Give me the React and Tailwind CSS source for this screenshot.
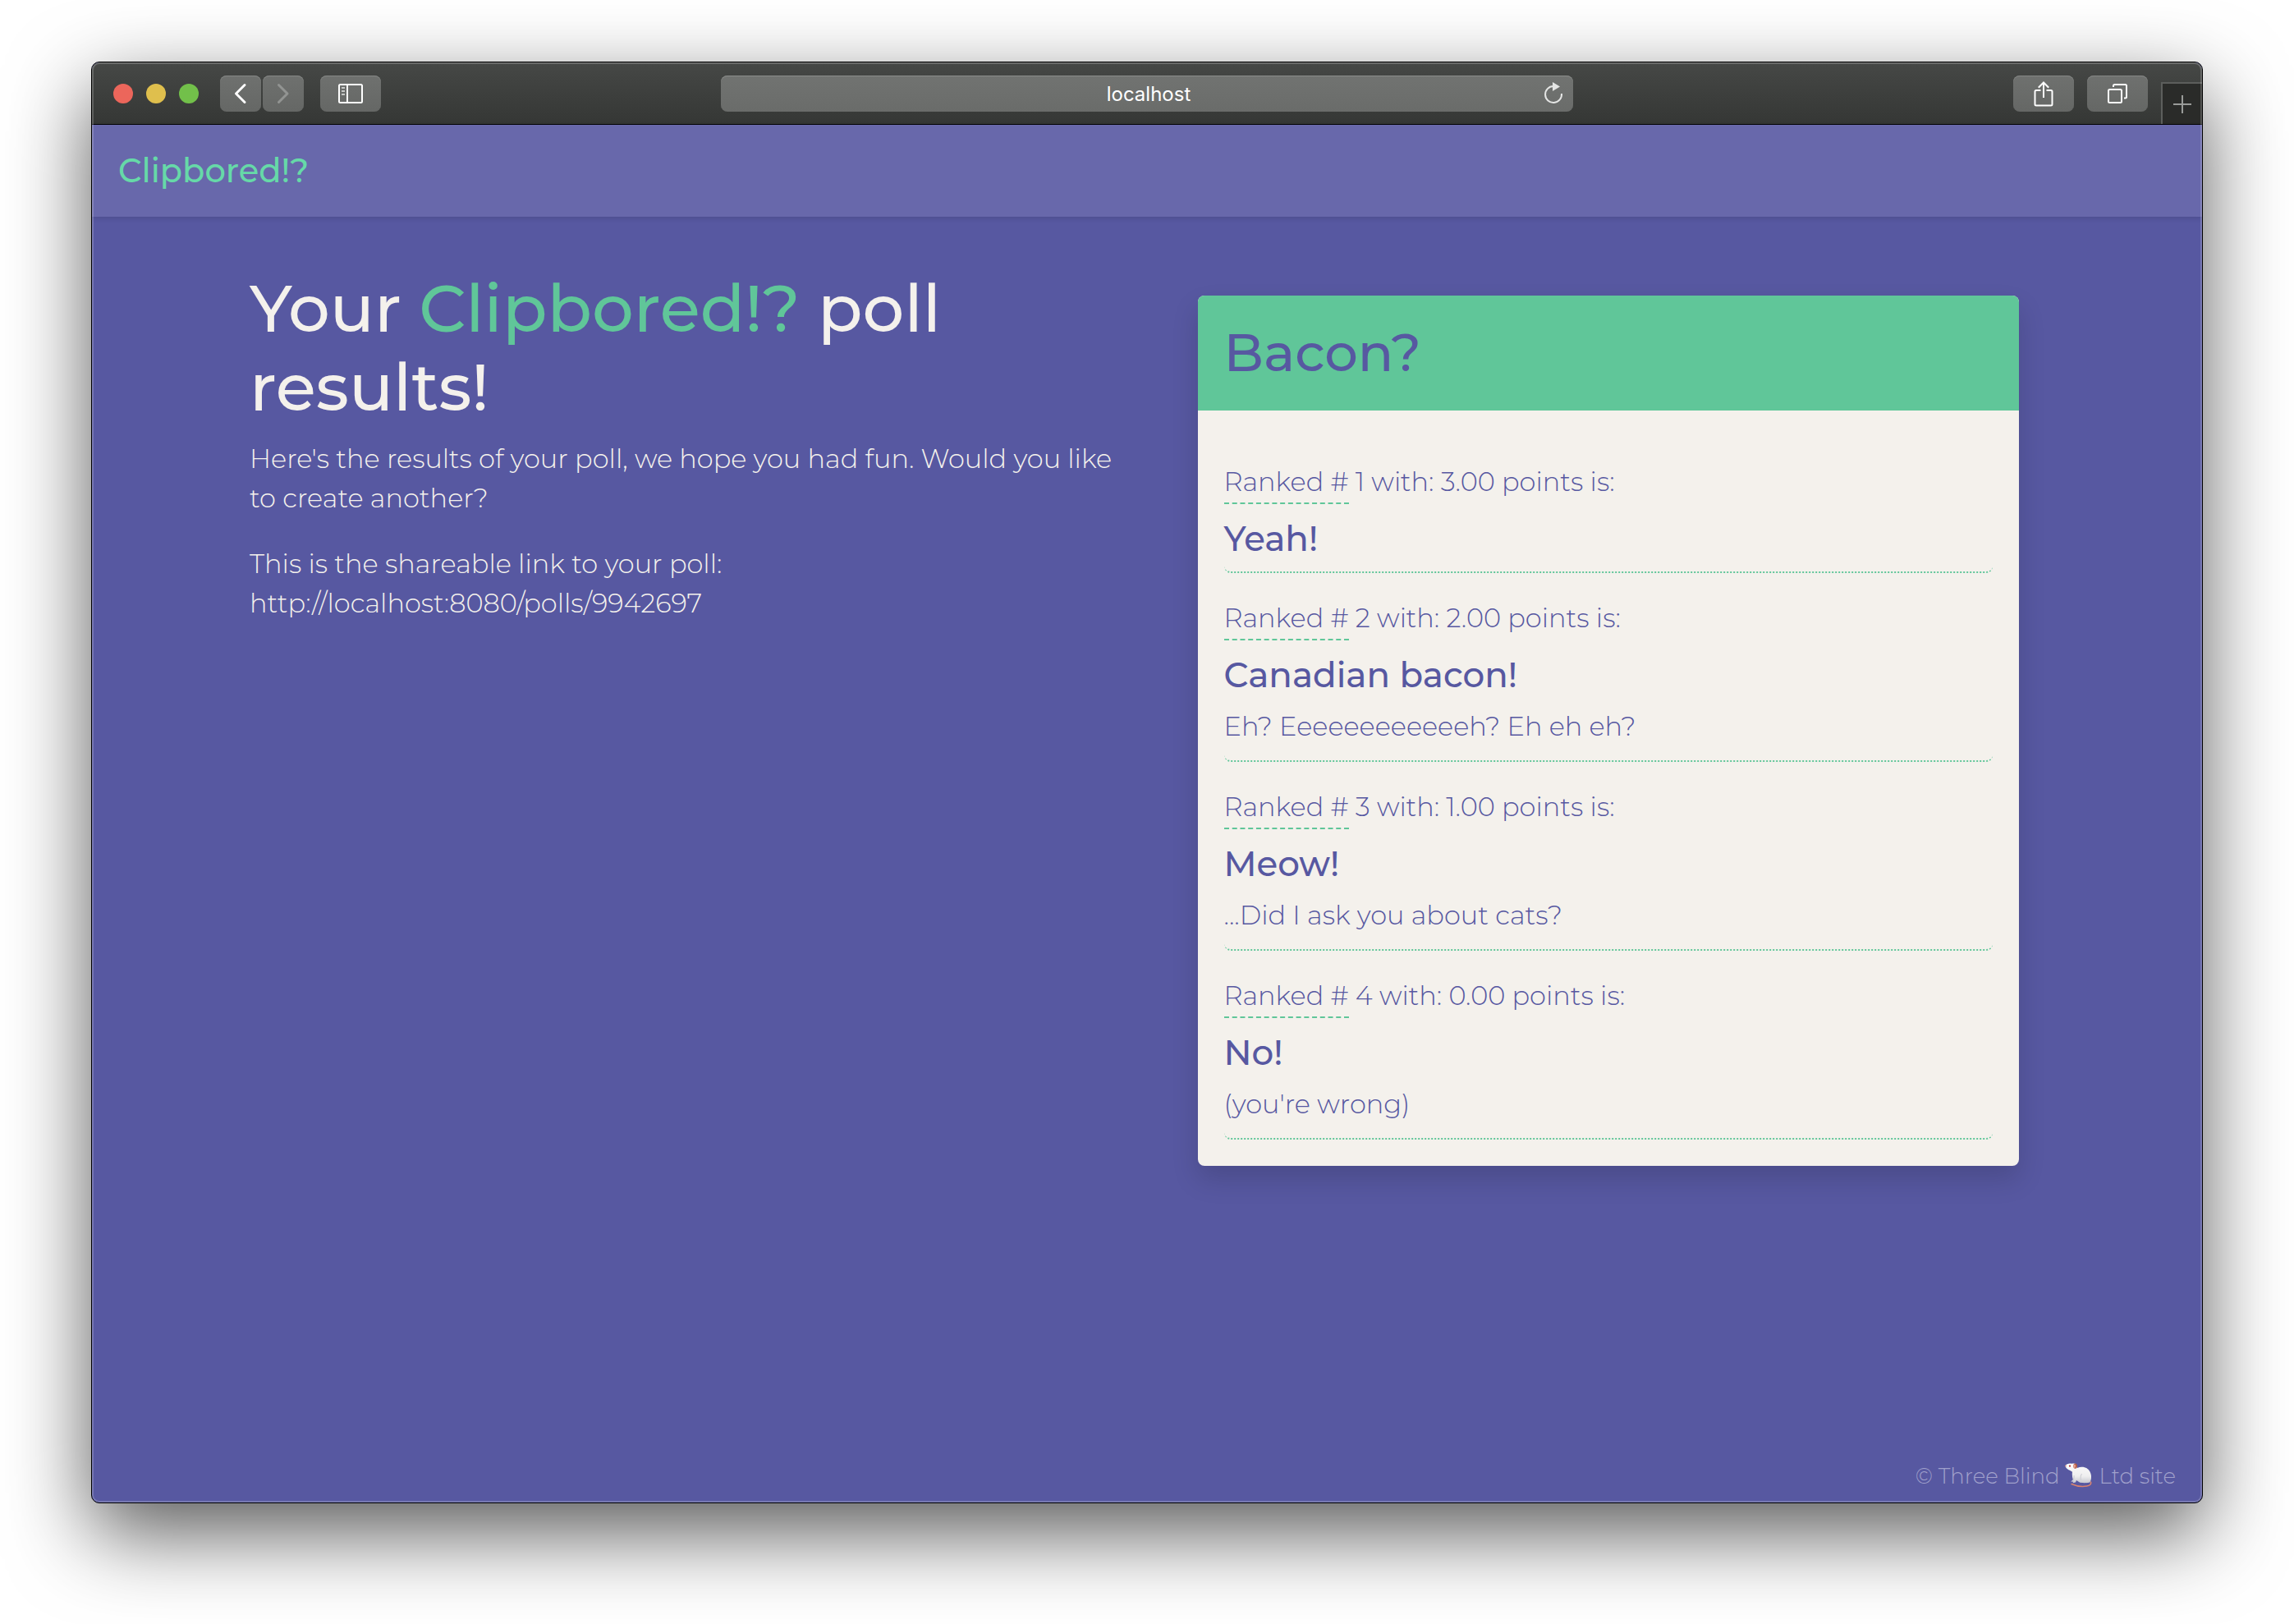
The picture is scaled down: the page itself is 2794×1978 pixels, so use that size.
const results = [
  { rank: 1, points: '3.00', title: 'Yeah!' },
  { rank: 2, points: '2.00', title: 'Canadian bacon!', note: 'Eh? Eeeeeeeeeeeeh? Eh eh eh?' },
  { rank: 3, points: '1.00', title: 'Meow!', note: '...Did I ask you about cats?' },
  { rank: 4, points: '0.00', title: 'No!', note: "(you're wrong)" },
];

function ToolbarButton({ label, wide, disabled, children }) {
  return (
    <button
      type="button"
      aria-label={label}
      disabled={disabled}
      className={
        (wide ? 'w-[74px]' : 'w-[50px]') +
        ' flex h-11 shrink-0 items-center justify-center rounded-lg bg-linear-to-b from-[#6f716f] to-[#656765] shadow-[inset_0_1px_0_#858785]'
      }
    >
      {children}
    </button>
  );
}

function Toolbar() {
  return (
    <header className="grid h-19 grid-cols-[383fr_519fr_383fr] border-b border-black bg-linear-to-b from-[#464846] to-[#353735]">
      <div className="flex items-start pt-4 pl-[26px]">
        <div className="flex h-11 items-center gap-4">
          <button type="button" aria-label="Close window" className="size-6 rounded-full bg-[#ec665b]" />
          <button type="button" aria-label="Minimize window" className="size-6 rounded-full bg-[#dfbf4d]" />
          <button type="button" aria-label="Zoom window" className="size-6 rounded-full bg-[#72c04a]" />
        </div>
        <div className="ml-[26px] flex gap-0.5">
          <ToolbarButton label="Back">
            <svg width="16" height="26" viewBox="0 0 16 26" fill="none" stroke="#fff" strokeWidth="3" strokeLinecap="round" strokeLinejoin="round">
              <path d="M13 2.500 2.500 13l10.500 10.500" />
            </svg>
          </ToolbarButton>
          <ToolbarButton label="Forward" disabled>
            <svg width="16" height="26" viewBox="0 0 16 26" fill="none" stroke="#929492" strokeWidth="3" strokeLinecap="round" strokeLinejoin="round">
              <path d="M2.500 2.500 13 13 2.500 23.500" />
            </svg>
          </ToolbarButton>
        </div>
        <div className="ml-5 flex">
          <ToolbarButton label="Show sidebar" wide>
            <svg width="30" height="24" viewBox="0 0 30 24" fill="none" stroke="#fff" strokeWidth="2">
              <rect x="1" y="1" width="28" height="22" rx="1.500" />
              <path d="M11 1v22" />
              <path d="M4 5h4M4 9h4M4 13h4" stroke="#c6c8c6" />
            </svg>
          </ToolbarButton>
        </div>
      </div>

      <div className="relative mt-4 h-11">
        <input
          type="text"
          aria-label="Address"
          defaultValue="localhost"
          className="h-11 w-full rounded-lg bg-linear-to-b from-[#717371] to-[#6a6c6a] pl-1 text-center font-['Inter',sans-serif] text-2xl text-white shadow-[inset_0_1px_0_#8a8c8a] outline-none"
        />
        <button type="button" aria-label="Reload" className="absolute top-2 right-2.5 flex size-7 items-center justify-center">
          <svg width="24" height="28" viewBox="0 0 24 28" fill="none">
            <path d="M12 5A10 10 0 1 0 22 14" stroke="#e4e5e4" strokeWidth="2" />
            <path d="M11 0l9 5.500L11 11z" fill="#e4e5e4" />
          </svg>
        </button>
      </div>

      <div className="flex items-start justify-end gap-4 pt-4">
        <ToolbarButton label="Share" wide>
          <svg width="24" height="32" viewBox="0 0 24 32" fill="none" stroke="#fff" strokeWidth="2">
            <path d="M8.500 12H3a1.500 1.500 0 0 0-1.500 1.500v15.500A1.500 1.500 0 0 0 3 30.500h18a1.500 1.500 0 0 0 1.500-1.500V13.500A1.500 1.500 0 0 0 21 12h-5.500" />
            <path d="M12 21V2.500" />
            <path d="M6.500 8 12 2.500 17.500 8" strokeLinecap="square" />
          </svg>
        </ToolbarButton>
        <ToolbarButton label="Show all tabs" wide>
          <svg width="24" height="24" viewBox="0 0 24 24" fill="none" stroke="#fff" strokeWidth="2">
            <rect x="1" y="7" width="16" height="16" rx="1.500" />
            <path d="M7 4V2.500A1.500 1.500 0 0 1 8.500 1H21.500A1.500 1.500 0 0 1 23 2.500V16a1.500 1.500 0 0 1-1.500 1.500H20" />
          </svg>
        </ToolbarButton>
        <button
          type="button"
          aria-label="New tab"
          className="mt-2 flex h-[51px] w-[50px] items-center justify-center border-t-2 border-l-2 border-[#5c5e5c] bg-[#2a2b29]"
        >
          <svg width="22" height="22" viewBox="0 0 22 22" stroke="#999b99" strokeWidth="2">
            <path d="M11 0v22M0 11h22" />
          </svg>
        </button>
      </div>
    </header>
  );
}

function Mouse() {
  return (
    <svg role="img" aria-label="mouse" width="34" height="30" viewBox="0 0 34 30" className="mr-2 ml-1.5 inline-block align-[-5px]">
      <defs>
        <linearGradient id="fur" x1="0" y1="0" x2="0" y2="1">
          <stop offset="0" stopColor="#fbfbfb" />
          <stop offset=".65" stopColor="#eeeeef" />
          <stop offset="1" stopColor="#c6c7cf" />
        </linearGradient>
      </defs>
      <path d="M8 25.500c5 2.200 13 3.500 18.500 2.600 4-.7 5.800-2.600 5-5.100" fill="none" stroke="#d9826f" strokeWidth="1.500" strokeLinecap="round" />
      <path
        d="M.4 3.200C2 1 5 .2 8 .8 10 .4 12 .2 14 1.200l1 4.800C20 3.500 26 4.500 29.500 9c3 4 3.500 10 .8 14.500-3 1-8 .8-12 .3L14 21l-1 2.500-3.500.8.8-1.500-3-.2 2.500-2.300C9 17.500 8.500 14 9 11 8.500 9.500 5 9 3.500 7.500 2 6.500.8 5 .4 3.200z"
        fill="url(#fur)"
      />
      <path d="M11 15c.3 3-.2 5-1.200 7M20.500 13c-1.500 2.500-1.800 5-1 7.500" fill="none" stroke="#c9cad1" strokeWidth="1" />
      <ellipse cx="12.600" cy="3.600" rx="2.300" ry="3.200" fill="#b0553f" />
      <ellipse cx="11.800" cy="3.800" rx="1.300" ry="2.200" fill="#e3a08f" />
      <circle cx="6" cy="3.600" r="1.100" fill="#b3262b" />
      <circle cx="1" cy="3.400" r=".9" fill="#d9938c" />
    </svg>
  );
}

function Result({ rank, points, title, note }) {
  return (
    <li className="rounded-lg border-b-2 border-dotted border-[#60c699] pt-[31px] pb-4">
      <p className="pb-[21px] font-light">
        <span className="border-b-2 border-dashed border-[#60c699] pb-1.5">Ranked #</span> {rank} with: {points} points is:
      </p>
      <h3 className="text-[42px] leading-12 font-medium">{title}</h3>
      {note && <p className="pt-[15px] pb-px font-light">{note}</p>}
    </li>
  );
}

export default function App() {
  return (
    <div className="flex min-h-screen flex-col bg-white px-[111px] pt-[75px] pb-[147px] font-['Montserrat','Inter',sans-serif]">
      <div className="relative flex grow flex-col overflow-hidden rounded-[10px] border border-black bg-[#5758a1] shadow-[0_36px_100px_rgba(0,0,0,0.65)] after:pointer-events-none after:absolute after:inset-0 after:rounded-[9px] after:border-2 after:border-white/20">
        <Toolbar />

        <nav className="flex h-28 items-center bg-[#6868ab] px-8 shadow-[0_2px_6px_rgba(0,0,0,0.12)]">
          <a href="/" className="text-[40px] leading-15 font-medium text-[#66d9a8]">
            Clipbored!?
          </a>
        </nav>

        <main className="grid grow grid-cols-2 items-start gap-15 px-48 pt-16 text-[32px] leading-12">
          <section className="text-[#f4f1ec]">
            <h1 className="text-[80px] leading-24 font-medium">
              Your <span className="text-[#60c699]">Clipbored!?</span> poll results!
            </h1>
            <p className="mt-[15px] font-light">
              Here's the results of your poll, we hope you had fun. Would you like to create another?
            </p>
            <p className="mt-8 font-light">
              This is the shareable link to your poll:
              <br />
              <a href="http://localhost:8080/polls/9942697">http://localhost:8080/polls/9942697</a>
            </p>
          </section>

          <section className="mx-auto mt-8 w-full max-w-[1000px] overflow-hidden rounded-lg bg-[#f4f1ec] text-[#5758a1] shadow-[0_16px_32px_rgba(0,0,0,0.15)]">
            <h2 className="bg-[#60c699] px-8 pt-[31px] pb-[33px] text-[64px] leading-19 font-medium">Bacon?</h2>
            <ol className="p-8">
              {results.map((result) => (
                <Result key={result.rank} {...result} />
              ))}
            </ol>
          </section>
        </main>

        <footer className="px-8 pb-3 text-right text-[26px] leading-10 font-light text-[#a0a0cb]">
          © Three Blind
          <Mouse />
          Ltd site
        </footer>
      </div>
    </div>
  );
}
